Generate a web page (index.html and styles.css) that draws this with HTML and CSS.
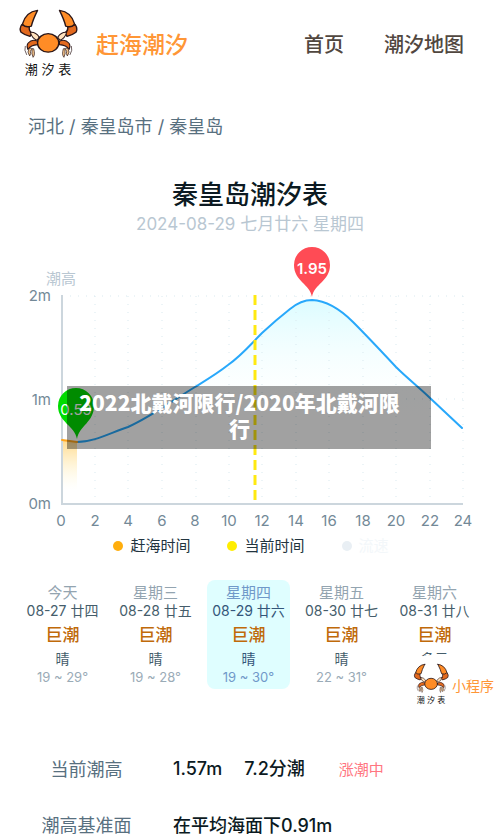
FILE: index.html
```html
<!DOCTYPE html>
<html lang="zh-CN">
  <head>
    <meta charset="utf-8">
    <meta name="viewport" content="width=device-width, initial-scale=1">
    <title>秦皇岛潮汐表</title>
    <link rel="stylesheet" href="styles.css">
  </head>

  <body>

    <!-- crab used by the logo and the mini program button -->
    <svg class="defs" width="0" height="0" aria-hidden="true">
      <symbol id="crab" viewBox="55 28 175 150">
        <g stroke="#2b1618" stroke-width="4" stroke-linejoin="round" stroke-linecap="round">
          <path fill="#e2691e" d="M66 76 Q58 88 64 98 Q74 106 90 110 L96 100 Q86 94 88 82 Z"/>
          <path fill="#e2691e" d="M222 76 Q230 88 224 98 Q214 106 198 110 L192 100 Q202 94 200 82 Z"/>
          <path fill="#ff8c26" d="M112 34 Q78 38 68 74 Q76 86 94 80 Q98 62 112 34 Z"/>
          <path fill="#ff8c26" d="M176 34 Q210 38 220 74 Q212 86 194 80 Q190 62 176 34 Z"/>
          <path fill="#ffe2bd" stroke-width="3" d="M91 98 Q106 96 117 112 L111 121 Q96 116 91 98 Z"/>
          <path fill="#ffe2bd" stroke-width="3" d="M197 98 Q182 96 171 112 L177 121 Q192 116 197 98 Z"/>
          <path fill="#e2691e" stroke-width="3" d="M112 124 Q96 116 84 130 Q79 138 84 148 Q92 135 112 134 Z"/>
          <path fill="#e2691e" stroke-width="3" d="M176 124 Q192 116 204 130 Q209 138 204 148 Q196 135 176 134 Z"/>
          <path fill="#f4c58c" stroke-width="2" d="M87 145 Q80 156 89 167 Q94 161 91 153 L96 147 Q94 162 99 171 Q106 164 101 147 Z"/>
          <path fill="#f4c58c" stroke-width="2" d="M201 145 Q208 156 199 167 Q194 161 197 153 L192 147 Q194 162 189 171 Q182 164 187 147 Z"/>
          <ellipse fill="#ff8c26" cx="143" cy="129" rx="31" ry="27"/>
          <path fill="none" stroke-width="2" d="M76 139 Q72 150 80 163 M211 139 Q215 150 207 163"/>
        </g>
      </symbol>
    </svg>

    <header class="header">
      <a class="brand" href="#">
        <span class="logo">
          <svg class="logo-crab"><use href="#crab"/></svg>
          <span class="logo-text">潮 汐 表</span>
        </span>
        <span class="brand-name">赶海潮汐</span>
      </a>
      <nav class="nav">
        <a href="#">首页</a>
        <a href="#">潮汐地图</a>
      </nav>
    </header>

    <nav class="crumbs">
      <a href="#">河北</a> / <a href="#">秦皇岛市</a> / <a href="#">秦皇岛</a>
    </nav>

    <main>
      <h1>秦皇岛潮汐表</h1>
      <p class="date">2024-08-29 七月廿六 星期四</p>

      <section class="chart">
        <svg class="plot" viewBox="0 240 500 294">
          <defs>
            <linearGradient id="tide" x1="0" y1="300" x2="0" y2="420" gradientUnits="userSpaceOnUse">
              <stop offset="0" stop-color="#dcfcff"/>
              <stop offset="1" stop-color="#fff" stop-opacity="0"/>
            </linearGradient>
            <linearGradient id="beach" x1="0" y1="440" x2="0" y2="490" gradientUnits="userSpaceOnUse">
              <stop offset="0" stop-color="#ffd98c"/>
              <stop offset="1" stop-color="#fffbd9" stop-opacity="0"/>
            </linearGradient>
          </defs>

          <path fill="url(#tide)" d="M77 442 C94 442 110 433 128 427 C152 416 172 401 195 387 C208 379 218 373 228 365 C242 355 250 345 262 333 Q276 320 290 309 Q301 300 312 300 Q332 301 353 322 C368 337 382 352 396 367 C408 379 420 388 430 398 L462 428 V504 H77 Z"/>
          <path fill="url(#beach)" d="M62 440 L77 442 V504 H62 Z"/>

          <path class="grid" d="M62 296 H463 M62 399 H463 M95 296 V504 M128 296 V504 M162 296 V504 M196 296 V504 M229 296 V504 M262 296 V504 M296 296 V504 M329 296 V504 M363 296 V504 M396 296 V504 M430 296 V504 M463 296 V504"/>
          <path class="axis" d="M62 295 V504 H463"/>
          <path class="curve" d="M77 442 C94 442 110 433 128 427 C152 416 172 401 195 387 C208 379 218 373 228 365 C242 355 250 345 262 333 Q276 320 290 309 Q301 300 312 300 Q332 301 353 322 C368 337 382 352 396 367 C408 379 420 388 430 398 L462 428"/>
          <path class="curve low" d="M62 440 L77 442"/>
          <path class="now" d="M255 295 V504"/>

          <!-- high and low tide pins -->
          <path fill="#ff4b55" d="M312 297 C310 284 294 281 294 265 A18 18 0 0 1 330 265 C330 281 314 284 312 297 Z"/>
          <text class="pin" x="312" y="274">1.95</text>
          <path fill="#00dc00" d="M77 439 C75 426 58 422 58 406 A18 18 0 0 1 94 406 C94 422 79 426 77 439 Z"/>
          <text class="pin pin-low" x="76" y="415">0.59</text>

          <text class="unit" x="61" y="284">潮高</text>
          <g class="y-label">
            <text x="51" y="301">2m</text>
            <text x="51" y="405">1m</text>
            <text x="51" y="509">0m</text>
          </g>
          <g class="x-label">
            <text x="61" y="526">0</text>
            <text x="95" y="526">2</text>
            <text x="128" y="526">4</text>
            <text x="162" y="526">6</text>
            <text x="195" y="526">8</text>
            <text x="229" y="526">10</text>
            <text x="262" y="526">12</text>
            <text x="296" y="526">14</text>
            <text x="329" y="526">16</text>
            <text x="363" y="526">18</text>
            <text x="396" y="526">20</text>
            <text x="430" y="526">22</text>
            <text x="463" y="526">24</text>
          </g>
        </svg>

        <div class="banner">2022北戴河限行/2020年北戴河限行</div>

        <ul class="legend">
          <li class="beach">赶海时间</li>
          <li class="current">当前时间</li>
          <li class="speed">流速</li>
        </ul>
      </section>

      <section class="days">
        <a class="day" href="#">
          <span class="week">今天</span>
          <span class="cal">08-27 廿四</span>
          <span class="tide">巨潮</span>
          <span class="sky">晴</span>
          <span class="temp">19 ~ 29°</span>
        </a>
        <a class="day" href="#">
          <span class="week">星期三</span>
          <span class="cal">08-28 廿五</span>
          <span class="tide">巨潮</span>
          <span class="sky">晴</span>
          <span class="temp">19 ~ 28°</span>
        </a>
        <a class="day active" href="#">
          <span class="week">星期四</span>
          <span class="cal">08-29 廿六</span>
          <span class="tide">巨潮</span>
          <span class="sky">晴</span>
          <span class="temp">19 ~ 30°</span>
        </a>
        <a class="day" href="#">
          <span class="week">星期五</span>
          <span class="cal">08-30 廿七</span>
          <span class="tide">巨潮</span>
          <span class="sky">晴</span>
          <span class="temp">22 ~ 31°</span>
        </a>
        <a class="day" href="#">
          <span class="week">星期六</span>
          <span class="cal">08-31 廿八</span>
          <span class="tide">巨潮</span>
          <span class="sky">多云</span>
        </a>
        <button class="mini" type="button">
          <span class="logo">
            <svg class="logo-crab"><use href="#crab"/></svg>
            <span class="logo-text">潮 汐 表</span>
          </span>
          小程序
        </button>
      </section>

      <table class="info">
        <tr>
          <th scope="row">当前潮高</th>
          <td><span>1.57m</span><span>7.2分潮</span><span class="rising">涨潮中</span></td>
        </tr>
        <tr>
          <th scope="row">潮高基准面</th>
          <td>在平均海面下0.91m</td>
        </tr>
      </table>
    </main>

  </body>
</html>
```
FILE: styles.css
```css
* {
    box-sizing: border-box;
}

body {
    margin: 0;
    background: #fff;
    color: #0c1a22;
    font-family: Inter, "Noto Sans CJK SC", sans-serif;
}

a {
    color: inherit;
    text-decoration: none;
}

.defs {
    position: absolute;
}

/* header */

.header {
    display: flex;
    justify-content: space-between;
    align-items: center;
    height: 86px;
    padding: 0 36px 0 18px;
}

.brand {
    display: flex;
    align-items: center;
    gap: 18px;
}

.logo {
    display: flex;
    flex-direction: column;
    align-items: center;
    color: #111;
}

.logo-crab {
    width: 60px;
    height: 52px;
}

.logo-text {
    font-size: 13px;
    line-height: 18px;
    white-space: nowrap;
}

.brand-name {
    color: #ff9636;
    font-size: 23px;
    font-weight: 500;
}

.nav {
    display: flex;
    gap: 40px;
    color: #51473f;
    font-size: 20px;
    font-weight: 500;
}

.crumbs {
    padding: 27px 28px 0;
    color: #58707f;
    font-size: 18px;
    line-height: 28px;
}

h1 {
    margin: 36px 0 0;
    font-size: 26px;
    font-weight: 500;
    line-height: 36px;
    text-align: center;
}

.date {
    margin: 0;
    color: #b9c7d2;
    font-size: 17px;
    line-height: 22px;
    text-align: center;
}

/* chart */

.chart {
    position: relative;
    margin-top: 5px;
}

.plot {
    display: block;
    width: 100%;
}

.grid {
    fill: none;
    stroke: #d9e9ef;
    stroke-dasharray: 1 7;
}

.axis {
    fill: none;
    stroke: #ccd6dd;
    stroke-width: 2;
}

.curve {
    fill: none;
    stroke: #28a8fb;
    stroke-width: 2;
    stroke-linecap: round;
}

.low {
    stroke: #ffa51e;
}

.now {
    stroke: #ffe911;
    stroke-width: 3;
    stroke-dasharray: 10 5;
}

.pin {
    fill: #fff;
    font-size: 15px;
    font-weight: 600;
    text-anchor: middle;
}

.pin-low {
    font-weight: 400;
}

.unit {
    fill: #b9c7d2;
    font-size: 15px;
    text-anchor: middle;
}

.y-label {
    fill: #738997;
    font-size: 15px;
    text-anchor: end;
}

.x-label {
    fill: #738997;
    font-size: 15px;
    text-anchor: middle;
}

.banner {
    position: absolute;
    top: 146px;
    left: 67px;
    right: 69px;
    padding: 3px 29px 8px 10px;
    background: rgba(0, 0, 0, .37);
    color: #fff;
    font-family: "Noto Sans CJK SC", sans-serif;
    font-size: 21px;
    font-weight: 900;
    line-height: 26px;
    text-align: center;
}

.legend {
    display: flex;
    justify-content: center;
    gap: 37px;
    margin: 0;
    padding: 0 0 0 2px;
    list-style: none;
    color: #22343f;
    font-size: 15px;
    line-height: 24px;
}

.legend li {
    display: flex;
    align-items: center;
    gap: 7px;
}

.legend li::before {
    content: "";
    width: 10px;
    height: 10px;
    border-radius: 50%;
    background: #ffae0d;
}

.legend .current::before {
    background: #ffed00;
}

.legend .speed {
    color: #f3f7fa;
}

.legend .speed::before {
    background: #e9eff4;
}

/* days */

.days {
    position: relative;
    display: grid;
    grid-template-columns: repeat(5, 1fr);
    gap: 10px;
    margin-top: 22px;
    padding: 0 24px 0 21px;
}

.day {
    display: flex;
    flex-direction: column;
    align-items: center;
    padding: 4px 0 3px;
    border-radius: 8px;
    color: #455d6b;
    font-size: 14px;
    line-height: 18px;
    white-space: nowrap;
}

.week {
    color: #93a4b0;
    font-size: 15px;
}

.tide {
    color: #c06a0a;
    font-size: 17px;
    font-weight: 500;
    line-height: 30px;
}

.temp {
    color: #9aabb7;
    font-size: 13px;
}

.active {
    background: #dffeff;
    color: #34567a;
}

.active .week,
.active .temp {
    color: #7099c9;
}

.mini {
    position: absolute;
    top: 75px;
    right: 0;
    display: flex;
    align-items: center;
    gap: 3px;
    padding: 8px 6px 4px 10px;
    border: 0;
    border-radius: 28px 0 0 28px;
    background: #fff;
    color: #ff9636;
    font: 14px Inter, "Noto Sans CJK SC", sans-serif;
}

.mini .logo-crab {
    width: 36px;
    height: 31px;
}

.mini .logo-text {
    font-size: 8px;
    line-height: 12px;
}

/* details */

.info {
    width: 100%;
    margin-top: 70px;
    border-collapse: collapse;
    font-size: 18px;
    font-weight: 500;
    line-height: 20px;
}

.info th,
.info td {
    padding: 0 0 36px;
}

.info tr:last-child > * {
    padding-bottom: 0;
}

.info th {
    width: 173px;
    color: #58707f;
    font-weight: 400;
}

.info span {
    margin-right: 22px;
}

.info .rising {
    padding-left: 12px;
    color: #ff7580;
    font-size: 15px;
    font-weight: 400;
}
```
